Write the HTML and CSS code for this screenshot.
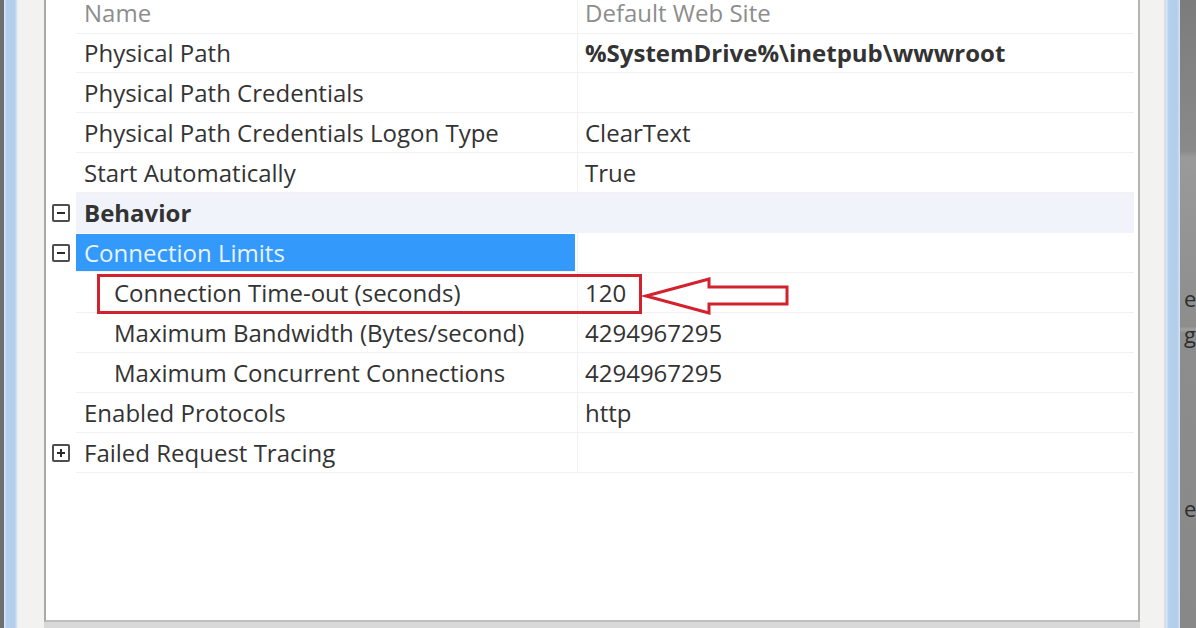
FILE: index.html
```html
<!DOCTYPE html>
<html>
<head>
    <meta charset="utf-8" />
    <title>Site Advanced Settings</title>
    <link rel="stylesheet" href="styles.css">
</head>
<body>
    <div class="window">
        <div class="frame-left">
            <div class="edge-dark"></div>
            <div class="edge-blue"></div>
            <div class="edge-light"></div>
        </div>

        <div class="panel">
            <div class="grid">
                <div class="row first">
                    <span class="gutter"></span>
                    <span class="name muted">Name</span>
                    <span class="value muted">Default Web Site</span>
                </div>
                <div class="row">
                    <span class="gutter"></span>
                    <span class="name">Physical Path</span>
                    <span class="value bold">%SystemDrive%\inetpub\wwwroot</span>
                </div>
                <div class="row">
                    <span class="gutter"></span>
                    <span class="name">Physical Path Credentials</span>
                    <span class="value"></span>
                </div>
                <div class="row">
                    <span class="gutter"></span>
                    <span class="name">Physical Path Credentials Logon Type</span>
                    <span class="value">ClearText</span>
                </div>
                <div class="row">
                    <span class="gutter"></span>
                    <span class="name">Start Automatically</span>
                    <span class="value">True</span>
                </div>
                <div class="row category">
                    <span class="gutter"><i class="toggle minus"></i></span>
                    <span class="name bold">Behavior</span>
                    <span class="value"></span>
                </div>
                <div class="row">
                    <span class="gutter"><i class="toggle minus"></i></span>
                    <span class="name selected">Connection Limits</span>
                    <span class="value"></span>
                </div>
                <div class="row">
                    <span class="gutter"></span>
                    <span class="name child">Connection Time-out (seconds)</span>
                    <span class="value">120</span>
                </div>
                <div class="row">
                    <span class="gutter"></span>
                    <span class="name child">Maximum Bandwidth (Bytes/second)</span>
                    <span class="value">4294967295</span>
                </div>
                <div class="row">
                    <span class="gutter"></span>
                    <span class="name child">Maximum Concurrent Connections</span>
                    <span class="value">4294967295</span>
                </div>
                <div class="row">
                    <span class="gutter"></span>
                    <span class="name">Enabled Protocols</span>
                    <span class="value">http</span>
                </div>
                <div class="row">
                    <span class="gutter"><i class="toggle plus"></i></span>
                    <span class="name">Failed Request Tracing</span>
                    <span class="value"></span>
                </div>
            </div>

            <!-- annotation drawn over the grid -->
            <div class="callout-box"></div>
            <svg class="callout-arrow" width="160" height="44" viewBox="0 0 160 44">
                <polygon points="6,22 69,5 69,13 147,13 147,30 69,30 69,39"
                         fill="#fff" stroke="#d2222d" stroke-width="3" stroke-linejoin="miter" />
            </svg>
        </div>

        <div class="frame-right">
            <div class="edge-light"></div>
            <div class="edge-blue"></div>
            <div class="edge-dark">
                <span class="frag frag-1">e</span>
                <span class="frag frag-2">g</span>
                <span class="frag frag-3">e</span>
            </div>
        </div>
    </div>
</body>
</html>
```

FILE: styles.css
```css
html, body {
    margin: 0;
    padding: 0;
    width: 1196px;
    height: 628px;
    overflow: hidden;
    background-color: #d9d9d9;
}

.window {
    display: flex;
    width: 1196px;
    height: 628px;
    font-family: "Open Sans", "Noto Sans", sans-serif;
    font-size: 24px;
    line-height: 26px;
    color: #333;
}

.frame-left, .frame-right {
    display: flex;
    height: 628px;
}

.frame-left {
    width: 44px;
}

.frame-right {
    width: 56px;
}

.edge-dark {
    background-color: #6f6f6f;
}

.frame-left .edge-dark {
    width: 4px;
}

.edge-blue {
    width: 13px;
    background: linear-gradient(to right, #dcebfa, #b5d0ee 20%, #b3cdea 80%, #d6e6f6);
}

.edge-light {
    flex: 1;
    background-color: #f2f2f0;
}

.frame-left .edge-light {
    border-left: 1px solid #e8eef4;
}

.frame-right .edge-light {
    border-right: 2px solid #dcdde2;
}

.frame-right .edge-blue {
    width: 14px;
}

.frame-right .edge-dark {
    width: 16px;
    display: flex;
    flex-direction: column;
    overflow: hidden;
    background: linear-gradient(to bottom, #7c7c7c, #8a8a8a 24%, #9a9a9a 25%, #8d8d8d 52%, #a0a0a0 52.4%, #8d8d8d 53%, #888 100%);
}

.frag {
    color: #2d2d2d;
    font-size: 22px;
    line-height: 22px;
    margin-left: 4px;
}

.frag-1 {
    margin-top: 287px;
}

.frag-2 {
    margin-top: 14px;
}

.frag-3 {
    margin-top: 152px;
}

.panel {
    position: relative;
    width: 1092px;
    height: 620px;
    border-left: 2px solid #a9a9a9;
    border-right: 2px solid #b4b4b4;
    border-bottom: 2px solid #bdbdbd;
    background-color: #fff;
    overflow: hidden;
}

.row {
    display: grid;
    grid-template-columns: 30px 501px 1fr;
    height: 40px;
}

.row.first {
    height: 33px;
}

.row > span {
    display: flex;
    align-items: center;
    box-sizing: border-box;
    white-space: nowrap;
}

.row.first > span {
    padding-bottom: 7px;
}

.gutter {
    justify-content: center;
}

.name {
    padding-left: 8px;
    border-bottom: 1px solid #f1f1f1;
}

.value {
    padding-left: 7px;
    border-left: 1px solid #f1f1f1;
    border-bottom: 1px solid #f1f1f1;
    margin-right: 4px;
}

.name.child {
    padding-left: 38px;
}

.muted {
    color: #8d8d8d;
}

.bold {
    font-weight: 700;
}

.category .name,
.category .value {
    background-color: #f0f4fa;
    border-color: #f0f4fa;
}

.selected {
    background-color: #3399fb;
    color: #e8f3ff;
    margin: 1px 2px 1px 0;
}

.toggle {
    display: block;
    width: 14px;
    height: 14px;
    border: 2px solid #4e4e4e;
    border-radius: 2px;
    background-color: #fff;
    position: relative;
}

.toggle::before {
    content: "";
    position: absolute;
    left: 3px;
    top: 6px;
    width: 8px;
    height: 2px;
    background-color: #2b2b2b;
}

.toggle.plus::after {
    content: "";
    position: absolute;
    left: 6px;
    top: 3px;
    width: 2px;
    height: 8px;
    background-color: #2b2b2b;
}

.callout-box {
    position: absolute;
    left: 51px;
    top: 274px;
    width: 539px;
    height: 34px;
    border: 3px solid #d2222d;
}

.callout-arrow {
    position: absolute;
    left: 594px;
    top: 274px;
}
```
